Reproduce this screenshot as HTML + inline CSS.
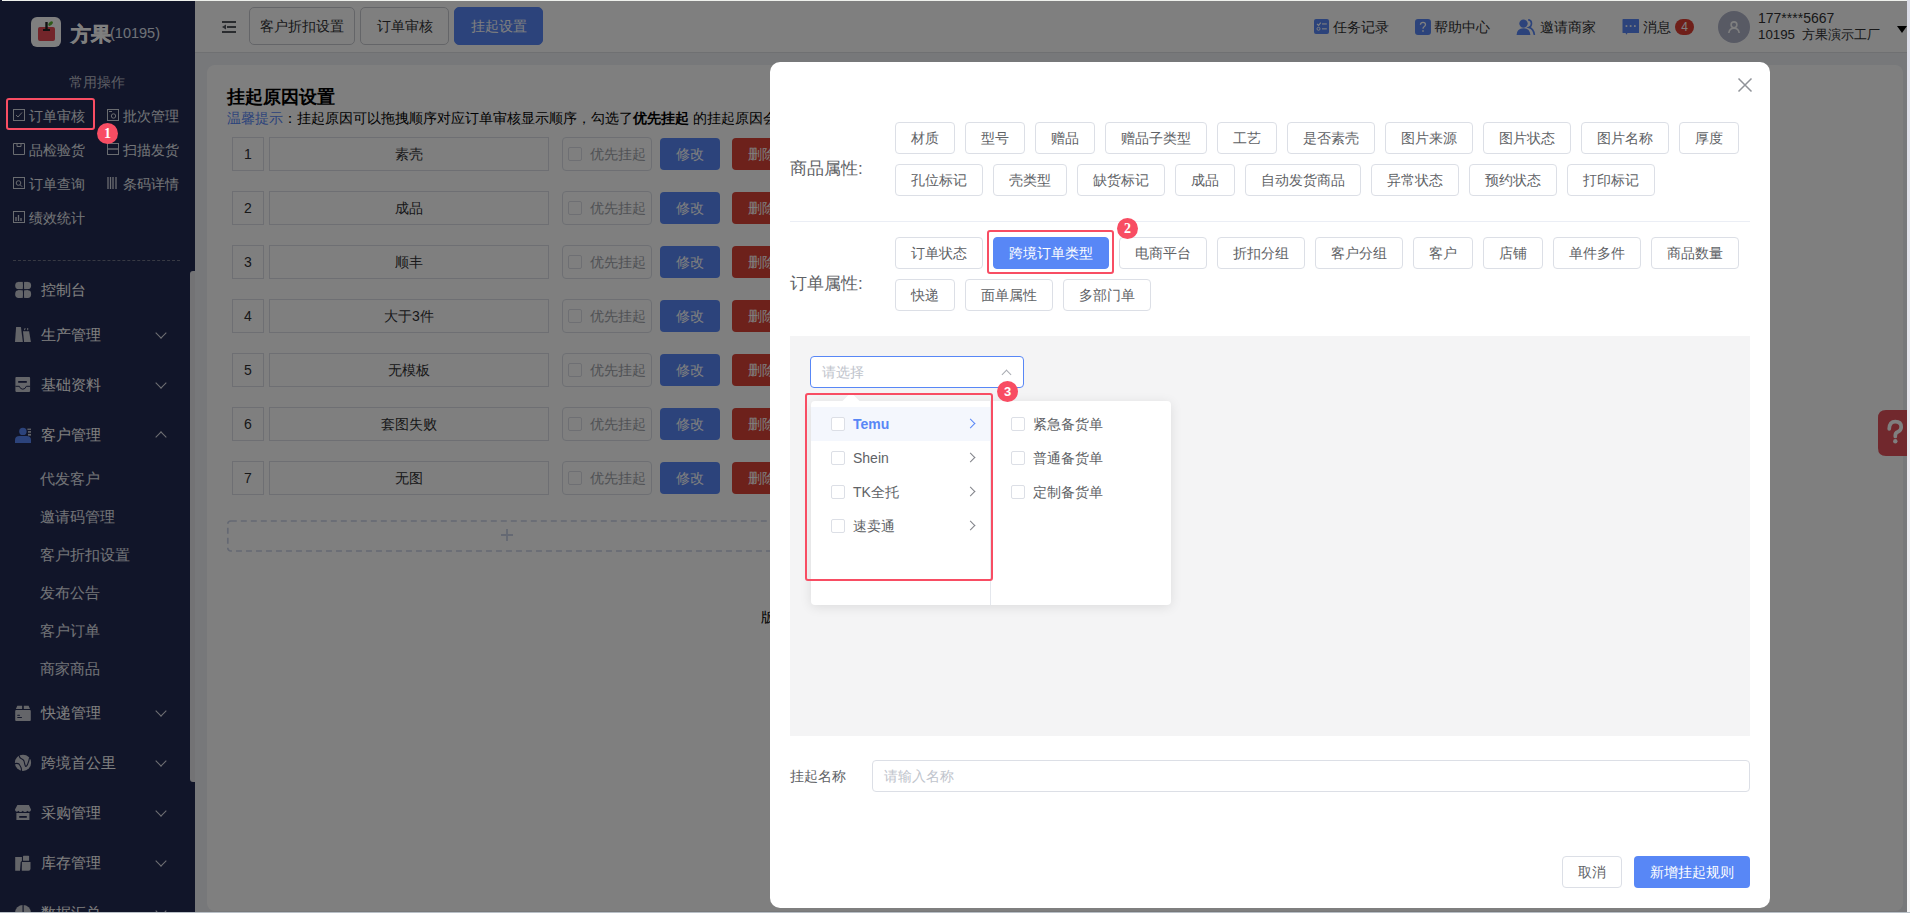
<!DOCTYPE html>
<html><head><meta charset="utf-8">
<style>
*{box-sizing:border-box;margin:0;padding:0}
html,body{width:1910px;height:913px;overflow:hidden}
body{position:relative;font-family:"Liberation Sans",sans-serif;font-size:14px;color:#303133;background:#eef0f4}
.abs{position:absolute}
/* sidebar */
#side{left:0;top:0;width:195px;height:913px;background:#232a52;color:#e6e8ef}
#side .logo{left:31px;top:17px;width:30px;height:30px;border-radius:6px;background:#fff}
#hdr{left:195px;top:0;width:1712px;height:53px;background:#fff;border-bottom:1px solid #dfe1e5}
.tab{position:absolute;top:7px;height:38px;border:1px solid #c9cbd1;border-radius:5px;background:#fff;font-size:14px;line-height:36px;text-align:center;color:#303133}
.tab.on{background:#5887f6;border-color:#5887f6;color:#fff}
#card{left:207px;top:65px;width:1696px;height:846px;background:#fff;border-radius:8px}
.row{position:absolute;left:0;width:600px;height:34px}
.idx{position:absolute;left:232px;width:32px;height:34px;border:1px solid #dcdfe6;text-align:center;line-height:32px;font-size:14px;color:#303133}
.nm{position:absolute;left:269px;width:280px;height:34px;border:1px solid #dcdfe6;text-align:center;line-height:32px;color:#303133}
.chk{position:absolute;left:562px;width:90px;height:34px;border:1px solid #dcdfe6;border-radius:4px;color:#a0a3aa}
.chk i{position:absolute;left:5px;top:9px;width:14px;height:14px;border:1px solid #dcdfe6;border-radius:2px}
.chk span{position:absolute;left:27px;top:0;line-height:32px}
.btn-e{position:absolute;left:660px;width:60px;height:32px;top:1px;border-radius:4px;background:#5887f6;color:#fff;text-align:center;line-height:32px}
.btn-d{position:absolute;left:732px;width:60px;height:32px;top:1px;border-radius:4px;background:#da4236;color:#fff;text-align:center;line-height:32px}
.q{position:absolute;height:16px;line-height:16px;font-size:14px;color:#e8eaf0;white-space:nowrap;padding-left:16px}
.qi{position:absolute;left:0;top:1px}
.mi{position:absolute;left:0;width:190px;height:50px;font-size:15px;color:#fff;padding-left:41px;display:flex;align-items:center}
.mic{position:absolute;left:12px;top:50%;margin-top:-12px}
.mic.blue{background:#5887f6}
.chev{position:absolute;left:157px;top:50%;margin-top:-6px;width:8px;height:8px;border-right:1px solid #e0e2ea;border-bottom:1px solid #e0e2ea;transform:rotate(45deg)}
.chev.up{margin-top:-2px;transform:rotate(-135deg)}
.si{position:absolute;left:0;width:190px;height:38px;line-height:38px;font-size:15px;color:#e4e6ee;padding-left:40px}
.tb{position:absolute;top:19px;height:16px;line-height:16px;font-size:14px;color:#303133;white-space:nowrap;padding-left:19px}
.ti{position:absolute;left:0;top:0}
.nbadge{display:inline-block;margin-left:4px;width:19px;height:16px;border-radius:8px;background:#de3e32;color:#fff;font-size:12px;line-height:16px;text-align:center;vertical-align:top}
.ci{position:absolute;height:34px;line-height:34px;font-size:14px;color:#606266;padding-left:22px;width:150px;white-space:nowrap}
.ci i{position:absolute;left:0;top:10px;width:14px;height:14px;border:1px solid #dcdfe6;border-radius:2px;background:#fff}
.arr{position:absolute;left:136px;top:13px;width:7px;height:7px;border-right:1px solid #808288;border-top:1px solid #808288;transform:rotate(45deg)}
#ov{left:0;top:0;width:1910px;height:913px;background:rgba(0,0,0,.5)}
/* modal */
#modal{left:770px;top:62px;width:1000px;height:846px;background:#fff;border-radius:10px}
.lbl{position:absolute;font-size:17px;color:#606266}
.tg{position:absolute;height:32px;border:1px solid #dcdfe6;border-radius:4px;background:#fff;color:#606266;font-size:14px;line-height:30px;text-align:center}
.tg.on{background:#5887f6;border-color:#5887f6;color:#fff}
.redbox{position:absolute;border:2px solid #f84d63;border-radius:3px}
.badge{position:absolute;width:21px;height:21px;border-radius:50%;background:#f84d63;color:#fff;font-family:"Liberation Serif",serif;font-weight:bold;font-size:14px;line-height:21px;text-align:center}
</style></head><body>
<div id="side" class="abs">
  <div class="logo abs"><svg width="30" height="30" viewBox="0 0 30 30" style="position:absolute;left:0;top:0"><rect x="7" y="10" width="17" height="14" rx="2" fill="#e64a55"/><rect x="14.3" y="5" width="2.4" height="8" fill="#222"/><rect x="12" y="12" width="7" height="2" fill="#222"/><ellipse cx="19.6" cy="6.6" rx="2.8" ry="1.6" transform="rotate(-40 19.6 6.6)" fill="#5cb531"/></svg></div>
  <div class="abs" style="left:71px;top:20px;font-size:19.5px;font-weight:bold;color:#fff;line-height:28px;white-space:nowrap;-webkit-text-stroke:0.5px #fff">方果</div><div class="abs" style="left:110px;top:25px;font-size:14.5px;color:#dfe2ee;line-height:16px;white-space:nowrap">(10195)</div>
  <div class="abs" style="left:69px;top:74px;font-size:14px;color:#bcbfca;line-height:16px">常用操作</div>
  <div class="q" style="left:13px;top:108px"><svg class="qi" width="12" height="12" viewBox="0 0 12 12"><rect x="0.5" y="0.5" width="11" height="11" fill="none" stroke="#d5d8e0"/><path d="M3 6 L5 8 L9 3.5" fill="none" stroke="#d5d8e0"/></svg>订单审核</div>
  <div class="q" style="left:107px;top:108px"><svg class="qi" width="12" height="12" viewBox="0 0 12 12"><rect x="0.5" y="0.5" width="11" height="11" fill="none" stroke="#d5d8e0"/><path d="M2 2.5 H5" stroke="#d5d8e0"/><circle cx="6.5" cy="7" r="2.2" fill="none" stroke="#d5d8e0"/></svg>批次管理</div>
  <div class="q" style="left:13px;top:142px"><svg class="qi" width="12" height="12" viewBox="0 0 12 12"><path d="M0.5 0.5 H11.5 V11.5 H0.5 Z" fill="none" stroke="#d5d8e0"/><path d="M4 0.5 V3.5 H8 V0.5" fill="none" stroke="#d5d8e0"/></svg>品检验货</div>
  <div class="q" style="left:107px;top:142px"><svg class="qi" width="12" height="12" viewBox="0 0 12 12"><rect x="0.5" y="0.5" width="11" height="11" fill="none" stroke="#d5d8e0"/><path d="M0.5 6 H11.5" stroke="#d5d8e0" stroke-width="1.4"/></svg>扫描发货</div>
  <div class="q" style="left:13px;top:176px"><svg class="qi" width="12" height="12" viewBox="0 0 12 12"><rect x="0.5" y="0.5" width="11" height="11" fill="none" stroke="#d5d8e0"/><circle cx="5.5" cy="6" r="2.3" fill="none" stroke="#d5d8e0"/><path d="M7.2 7.8 L9.2 9.8" stroke="#d5d8e0"/></svg>订单查询</div>
  <div class="q" style="left:107px;top:176px"><svg class="qi" width="12" height="12" viewBox="0 0 12 12"><path d="M1 0 V12 M3.5 0 V12 M6 0 V12 M9 0 V12" stroke="#d5d8e0" stroke-width="1.3"/></svg>条码详情</div>
  <div class="q" style="left:13px;top:210px"><svg class="qi" width="12" height="12" viewBox="0 0 12 12"><rect x="0.5" y="0.5" width="11" height="11" fill="none" stroke="#d5d8e0"/><path d="M3 10 V6 M5.5 10 V4 M8 10 V7" stroke="#d5d8e0" stroke-width="1.3"/></svg>绩效统计</div>
  <div class="abs" style="left:13px;top:260px;width:167px;border-top:1px dashed #6e7386"></div>
  <div class="mi" style="top:270px;height:40px"><svg class="mic" width="24" height="24" viewBox="0 0 24 24"><rect x="3.2" y="3.9" width="7.6" height="7.2" rx="3.4" fill="#c9cbd3"/><rect x="12.1" y="3.9" width="7" height="7.2" rx="3.4" fill="#c9cbd3"/><rect x="3.2" y="12.3" width="7.6" height="7.6" rx="3.4" fill="#c9cbd3"/><rect x="12.1" y="12.3" width="7" height="7.6" rx="3.4" fill="#c9cbd3"/><rect x="6" y="3.9" width="4.8" height="7.2" fill="#c9cbd3"/><rect x="12.1" y="3.9" width="4" height="7.2" fill="#c9cbd3"/><rect x="6" y="12.3" width="4.8" height="7.6" fill="#c9cbd3"/><rect x="12.1" y="12.3" width="4" height="7.6" fill="#c9cbd3"/></svg>控制台</div>
  <div class="mi" style="top:310px"><svg class="mic" width="24" height="24" viewBox="0 0 24 24"><path d="M4.1 4 H8.9 L10.9 18.9 H3 Z" fill="#c9cbd3"/><path d="M11 8.2 H17.1 L18.9 18.9 H12.1 Z" fill="#c9cbd3"/><rect x="12.3" y="5" width="1.1" height="2.2" fill="#c9cbd3" transform="rotate(20 12.8 6)"/><rect x="15.2" y="5" width="1" height="2.2" fill="#c9cbd3"/></svg>生产管理<b class="chev"></b></div>
  <div class="mi" style="top:360px"><svg class="mic" width="24" height="24" viewBox="0 0 24 24"><rect x="3.4" y="4.1" width="14.7" height="14.8" rx="0.8" fill="#c9cbd3"/><rect x="6.2" y="8" width="8.6" height="1.8" fill="#232a52"/><path d="M3.4 13.3 H7.3 Q8.3 16.2 10.8 16.2 Q13.3 16.2 14.3 13.3 H18.1" fill="none" stroke="#232a52" stroke-width="1"/></svg>基础资料<b class="chev"></b></div>
  <div class="mi" style="top:410px"><svg class="mic" width="24" height="24" viewBox="0 0 24 24"><circle cx="10.9" cy="8.4" r="3.7" fill="#5887f6"/><path d="M3 19.9 V17 Q3 13.1 7.5 13.1 H14.5 Q19 13.1 19 17 V19.9 Z" fill="#5887f6"/><rect x="15.4" y="5.6" width="3.6" height="1.3" fill="#c9cbd3"/><rect x="16" y="8.1" width="3" height="1.6" fill="#c9cbd3"/><rect x="16" y="10.9" width="3" height="1.7" fill="#c9cbd3"/></svg>客户管理<b class="chev up"></b></div>
  <div class="si" style="top:460px">代发客户</div>
  <div class="si" style="top:498px">邀请码管理</div>
  <div class="si" style="top:536px">客户折扣设置</div>
  <div class="si" style="top:574px">发布公告</div>
  <div class="si" style="top:612px">客户订单</div>
  <div class="si" style="top:650px">商家商品</div>
  <div class="mi" style="top:688px"><svg class="mic" width="24" height="24" viewBox="0 0 24 24"><path d="M5.3 4.8 H10.1 V7.9 H3.9 Z" fill="#c9cbd3"/><path d="M11.8 4.8 H16.6 L18 7.9 H11.8 Z" fill="#c9cbd3"/><rect x="3.2" y="8.9" width="15.6" height="11" rx="1" fill="#c9cbd3"/><rect x="5.2" y="13.8" width="2.8" height="1" rx="0.5" fill="#232a52"/><rect x="5.2" y="15.9" width="4.8" height="1" rx="0.5" fill="#232a52"/></svg>快递管理<b class="chev"></b></div>
  <div class="mi" style="top:738px"><svg class="mic" width="24" height="24" viewBox="0 0 24 24"><circle cx="11" cy="11.8" r="8.1" fill="#c9cbd3"/><path d="M7.2 4.4 Q7.5 7 9 7.5 Q11.5 8.3 12 10 Q13 14.5 13.5 15.3 Q14.5 15.8 15.5 13.5 Q17 10 17.5 6.8" fill="none" stroke="#232a52" stroke-width="1.1"/><path d="M3 12.6 Q5.5 12 7 13 Q8 14.5 9 16.5 Q9.6 18 9.5 20" fill="none" stroke="#232a52" stroke-width="1.1"/></svg>跨境首公里<b class="chev"></b></div>
  <div class="mi" style="top:788px"><svg class="mic" width="24" height="24" viewBox="0 0 24 24"><path d="M5.4 4 H16.9 L19 8.6 Q19 10.6 17.4 10.7 Q15.9 10.7 15.4 9.8 Q14.5 11 13 11 Q11.5 11 10.8 9.8 Q10 11 8.4 11 Q7 11 6.5 9.8 Q5.7 10.7 4.6 10.7 Q3 10.6 3 8.6 Z" fill="#c9cbd3"/><path d="M4.4 12 H17.4 V19 H4.4 Z" fill="#c9cbd3"/><rect x="7.2" y="15" width="7.6" height="1.8" fill="#232a52"/></svg>采购管理<b class="chev"></b></div>
  <div class="mi" style="top:838px"><svg class="mic" width="24" height="24" viewBox="0 0 24 24"><path d="M3.2 6 H9.9 V10 L8.7 11 L8 19.8 H3.2 Z" fill="#c9cbd3"/><rect x="11" y="4.8" width="6.1" height="5" rx="0.6" fill="#c9cbd3"/><path d="M9.9 11 H18.5 V17.8 Q18.5 19.8 16.5 19.8 H9.8 Z" fill="#c9cbd3"/></svg>库存管理<b class="chev"></b></div>
  <div class="mi" style="top:888px"><svg class="mic" width="24" height="24" viewBox="0 0 24 24"><circle cx="11" cy="12" r="8" fill="#c9cbd3"/><rect x="10.5" y="3" width="1.2" height="9" fill="#232a52"/></svg>数据汇总<b class="chev"></b></div>
  <div class="abs" style="left:190px;top:271px;width:5px;height:511px;background:#e6e7ea;border-radius:3px 0 0 3px"></div>
</div>
<div id="hdr" class="abs">
  <svg class="abs" style="left:26px;top:20px" width="16" height="14" viewBox="0 0 16 14"><rect x="1" y="1" width="14" height="2" fill="#55585f"/><rect x="6" y="6" width="9" height="2" fill="#55585f"/><rect x="1" y="11" width="14" height="2" fill="#55585f"/><path d="M1 7 L5 4.5 L5 9.5 Z" fill="#55585f"/></svg>
  <div class="tab" style="left:54px;width:106px">客户折扣设置</div>
  <div class="tab" style="left:165px;width:89px">订单审核</div>
  <div class="tab on" style="left:259px;width:89px">挂起设置</div>
  <div class="tb" style="left:1119px"><svg class="ti" width="16" height="16" viewBox="0 0 16 16" style="top:0"><rect x="0" y="0" width="15" height="15" rx="2" fill="#5887f6"/><path d="M3 5 L4.6 6.4 L6.8 3.6" fill="none" stroke="#fff" stroke-width="1.1"/><circle cx="4.5" cy="9.8" r="1.5" fill="none" stroke="#fff" stroke-width="1"/><rect x="8" y="4.4" width="4.8" height="1.1" fill="#fff"/><rect x="8" y="9.3" width="4.8" height="1.1" fill="#fff"/></svg>任务记录</div>
  <div class="tb" style="left:1220px"><svg class="ti" width="16" height="16" viewBox="0 0 16 16"><rect x="0" y="0" width="16" height="16" rx="3" fill="#5887f6"/><path d="M5.4 5.8 Q5.6 3.3 8 3.3 Q10.5 3.3 10.5 5.6 Q10.5 7 9 7.8 Q8 8.3 8 9.8" fill="none" stroke="#fff" stroke-width="1.3"/><rect x="7.3" y="11.2" width="1.4" height="1.6" fill="#fff"/></svg>帮助中心</div>
  <div class="tb" style="left:1321px;padding-left:24px"><svg class="ti" width="20" height="16" viewBox="0 0 20 16"><circle cx="7.5" cy="4.6" r="4.2" fill="#5887f6"/><path d="M0.6 16 Q0.8 9.2 7.5 9.2 Q13.9 9.2 14.4 16 Z" fill="#5887f6"/><path d="M12.2 0.6 Q15.5 1.3 15.5 4.4 Q15.5 7.3 12.8 8.4 Q17.6 9.6 18.4 16" fill="none" stroke="#5887f6" stroke-width="1.6"/></svg>邀请商家</div>
  <div class="tb" style="left:1427px;padding-left:21px"><svg class="ti" width="18" height="17" viewBox="0 0 18 17"><path d="M1 0 H16.5 Q17 0 17 1 V13.5 Q17 14 16.5 14 H5.5 L4.5 15.8 L3.5 14 H1 Q0.5 14 0.5 13.5 V1 Q0.5 0 1 0 Z" fill="#5887f6"/><rect x="3.6" y="6.2" width="1.7" height="1.7" fill="#fff"/><rect x="7.8" y="6.2" width="1.7" height="1.7" fill="#fff"/><rect x="12" y="6.2" width="1.7" height="1.7" fill="#fff"/></svg>消息<span class="nbadge">4</span></div>
  <svg class="abs" style="left:1523px;top:11px" width="32" height="32" viewBox="0 0 32 32"><circle cx="16" cy="16" r="16" fill="#b0b4c9"/><circle cx="16" cy="13.8" r="2.9" fill="none" stroke="#fff" stroke-width="1.6"/><path d="M10.8 22 Q11.5 17.3 16 17.3 Q20.5 17.3 21.2 22" fill="none" stroke="#fff" stroke-width="1.6"/></svg>
  <div class="abs" style="left:1563px;top:10px;font-size:14px;line-height:16px;color:#303133;white-space:nowrap">177****5667<br><span style="font-size:13.3px">10195&nbsp; 方果演示工厂</span></div>
  <div class="abs" style="left:1702px;top:26px;width:0;height:0;border-left:5px solid transparent;border-right:5px solid transparent;border-top:7px solid #000"></div>
</div>
<div id="card" class="abs"></div>
<div id="bg" class="abs" style="left:0;top:0">
  <div class="abs" style="left:227px;top:86px;font-size:18px;font-weight:bold;color:#000;line-height:22px;white-space:nowrap">挂起原因设置</div>
  <div class="abs" style="left:227px;top:110px;font-size:14px;color:#000;line-height:16px;white-space:nowrap"><span style="color:#5887f6">温馨提示</span>：挂起原因可以拖拽顺序对应订单审核显示顺序，勾选了<b>优先挂起</b> 的挂起原因会</div>
  <div class="idx" style="top:137px">1</div><div class="nm" style="top:137px">素壳</div><div class="chk" style="top:137px"><i></i><span>优先挂起</span></div><div class="btn-e" style="top:138px">修改</div><div class="btn-d" style="top:138px">删除</div>
  <div class="idx" style="top:191px">2</div><div class="nm" style="top:191px">成品</div><div class="chk" style="top:191px"><i></i><span>优先挂起</span></div><div class="btn-e" style="top:192px">修改</div><div class="btn-d" style="top:192px">删除</div>
  <div class="idx" style="top:245px">3</div><div class="nm" style="top:245px">顺丰</div><div class="chk" style="top:245px"><i></i><span>优先挂起</span></div><div class="btn-e" style="top:246px">修改</div><div class="btn-d" style="top:246px">删除</div>
  <div class="idx" style="top:299px">4</div><div class="nm" style="top:299px">大于3件</div><div class="chk" style="top:299px"><i></i><span>优先挂起</span></div><div class="btn-e" style="top:300px">修改</div><div class="btn-d" style="top:300px">删除</div>
  <div class="idx" style="top:353px">5</div><div class="nm" style="top:353px">无模板</div><div class="chk" style="top:353px"><i></i><span>优先挂起</span></div><div class="btn-e" style="top:354px">修改</div><div class="btn-d" style="top:354px">删除</div>
  <div class="idx" style="top:407px">6</div><div class="nm" style="top:407px">套图失败</div><div class="chk" style="top:407px"><i></i><span>优先挂起</span></div><div class="btn-e" style="top:408px">修改</div><div class="btn-d" style="top:408px">删除</div>
  <div class="idx" style="top:461px">7</div><div class="nm" style="top:461px">无图</div><div class="chk" style="top:461px"><i></i><span>优先挂起</span></div><div class="btn-e" style="top:462px">修改</div><div class="btn-d" style="top:462px">删除</div>
  <svg class="abs" style="left:226px;top:519px" width="700" height="34"><rect x="1.8" y="2" width="1000" height="30" rx="3" fill="none" stroke="#cad2e6" stroke-width="1.7" stroke-dasharray="6 4"/><path d="M275 16 H287 M281 10 V22" stroke="#cad2e6" stroke-width="1.8"/></svg>
  <div class="abs" style="left:761px;top:609px;font-size:14px;line-height:16px;color:#000">版</div>
  <svg class="abs" style="left:1878px;top:410px" width="32" height="46" viewBox="0 0 32 46"><path d="M8 0 H32 V46 H8 Q0 46 0 38 V8 Q0 0 8 0 Z" fill="#e2505a"/><path d="M11.2 18.8 Q11.5 11.6 17.3 11.6 Q23.2 11.6 23.2 17 Q23.2 20.6 19.6 22 Q17.3 22.9 17.3 25.4 V26.4" fill="none" stroke="#fff" stroke-width="3.7" stroke-linecap="round"/><circle cx="17.3" cy="31.3" r="2.2" fill="#fff"/></svg>
</div>
<div id="ov" class="abs"></div>
<div id="modal" class="abs">
  <svg class="abs" style="left:967px;top:15px" width="16" height="16" viewBox="0 0 16 16"><path d="M1.5 1.5 L14.5 14.5 M14.5 1.5 L1.5 14.5" stroke="#909399" stroke-width="1.5"/></svg>
  <div class="lbl" style="left:20px;top:97px;line-height:20px">商品属性:</div>
  <div class="tg" style="left:125px;top:60px;width:60px">材质</div><div class="tg" style="left:195px;top:60px;width:60px">型号</div><div class="tg" style="left:265px;top:60px;width:60px">赠品</div><div class="tg" style="left:335px;top:60px;width:102px">赠品子类型</div><div class="tg" style="left:447px;top:60px;width:60px">工艺</div><div class="tg" style="left:517px;top:60px;width:88px">是否素壳</div><div class="tg" style="left:615px;top:60px;width:88px">图片来源</div><div class="tg" style="left:713px;top:60px;width:88px">图片状态</div><div class="tg" style="left:811px;top:60px;width:88px">图片名称</div><div class="tg" style="left:909px;top:60px;width:60px">厚度</div>
  <div class="tg" style="left:125px;top:102px;width:88px">孔位标记</div><div class="tg" style="left:223px;top:102px;width:74px">壳类型</div><div class="tg" style="left:307px;top:102px;width:88px">缺货标记</div><div class="tg" style="left:405px;top:102px;width:60px">成品</div><div class="tg" style="left:475px;top:102px;width:116px">自动发货商品</div><div class="tg" style="left:601px;top:102px;width:88px">异常状态</div><div class="tg" style="left:699px;top:102px;width:88px">预约状态</div><div class="tg" style="left:797px;top:102px;width:88px">打印标记</div>
  <div class="abs" style="left:20px;top:159px;width:960px;height:1px;background:#ebeef5"></div>
  <div class="lbl" style="left:20px;top:212px;line-height:20px">订单属性:</div>
  <div class="tg" style="left:125px;top:175px;width:88px">订单状态</div><div class="tg on" style="left:223px;top:175px;width:116px">跨境订单类型</div><div class="tg" style="left:349px;top:175px;width:88px">电商平台</div><div class="tg" style="left:447px;top:175px;width:88px">折扣分组</div><div class="tg" style="left:545px;top:175px;width:88px">客户分组</div><div class="tg" style="left:643px;top:175px;width:60px">客户</div><div class="tg" style="left:713px;top:175px;width:60px">店铺</div><div class="tg" style="left:783px;top:175px;width:88px">单件多件</div><div class="tg" style="left:881px;top:175px;width:88px">商品数量</div>
  <div class="tg" style="left:125px;top:217px;width:60px">快递</div><div class="tg" style="left:195px;top:217px;width:88px">面单属性</div><div class="tg" style="left:293px;top:217px;width:88px">多部门单</div>
  <div class="abs" style="left:20px;top:274px;width:960px;height:400px;background:#f4f4f5"></div>
  <div class="abs" style="left:40px;top:294px;width:214px;height:32px;border:1px solid #5887f6;border-radius:4px;background:#fff;color:#c0c4cc;line-height:30px;padding-left:11px">请选择</div>
  <div class="abs" style="left:233px;top:309px;width:7px;height:7px;border-left:1px solid #a8abb2;border-top:1px solid #a8abb2;transform:rotate(45deg)"></div>
  <div class="abs" style="left:41px;top:339px;width:360px;height:204px;background:#fff;border-radius:4px;box-shadow:0 2px 12px rgba(0,0,0,.1)"></div>
  <div class="abs" style="left:75px;top:333px;width:12px;height:12px;background:#fff;transform:rotate(45deg)"></div>
  <div class="abs" style="left:220px;top:339px;width:1px;height:204px;background:#e4e7ed"></div>
  <div class="abs" style="left:41px;top:345px;width:179px;height:34px;background:#f4f7fd"></div>
  <div class="ci" style="left:61px;top:345px;color:#5887f6;font-weight:bold"><i></i>Temu<b class="arr" style="border-color:#5887f6"></b></div>
  <div class="ci" style="left:61px;top:379px"><i></i>Shein<b class="arr"></b></div>
  <div class="ci" style="left:61px;top:413px"><i></i>TK全托<b class="arr"></b></div>
  <div class="ci" style="left:61px;top:447px"><i></i>速卖通<b class="arr"></b></div>
  <div class="ci" style="left:241px;top:345px"><i></i>紧急备货单</div>
  <div class="ci" style="left:241px;top:379px"><i></i>普通备货单</div>
  <div class="ci" style="left:241px;top:413px"><i></i>定制备货单</div>
  <div class="abs" style="left:20px;top:706px;font-size:14px;color:#606266;line-height:16px">挂起名称</div>
  <div class="abs" style="left:102px;top:698px;width:878px;height:32px;border:1px solid #dcdfe6;border-radius:4px;color:#c0c4cc;line-height:30px;padding-left:11px">请输入名称</div>
  <div class="abs" style="left:792px;top:794px;width:60px;height:32px;border:1px solid #dcdfe6;border-radius:4px;color:#606266;line-height:30px;text-align:center">取消</div>
  <div class="abs" style="left:864px;top:794px;width:116px;height:32px;border-radius:4px;background:#5887f6;color:#fff;line-height:32px;text-align:center">新增挂起规则</div>
</div>
<div id="ann" class="abs" style="left:0;top:0">
  <div class="abs" style="left:6px;top:98px;width:89px;height:32px;border:2px solid #f84d63;border-radius:3px"></div>
  <div class="badge" style="left:97px;top:123px">1</div>
  <div class="abs" style="left:987px;top:230px;width:127px;height:44px;border:2px solid #f84d63;border-radius:3px"></div>
  <div class="badge" style="left:1117px;top:218px">2</div>
  <div class="abs" style="left:805px;top:393px;width:188px;height:188px;border:2px solid #f84d63;border-radius:3px"></div>
  <div class="badge" style="left:997px;top:381px;font-family:'Liberation Sans',sans-serif;font-size:13px">3</div>
</div>
<div class="abs" style="left:2px;top:0;width:1908px;height:1px;background:#eef0ec"></div>
<div class="abs" style="left:0;top:912px;width:1910px;height:1px;background:#b9c0c7"></div>
<div class="abs" style="left:1907px;top:0;width:3px;height:912px;background:linear-gradient(#dcdde8,#f4f4f5)"></div>
</body></html>
